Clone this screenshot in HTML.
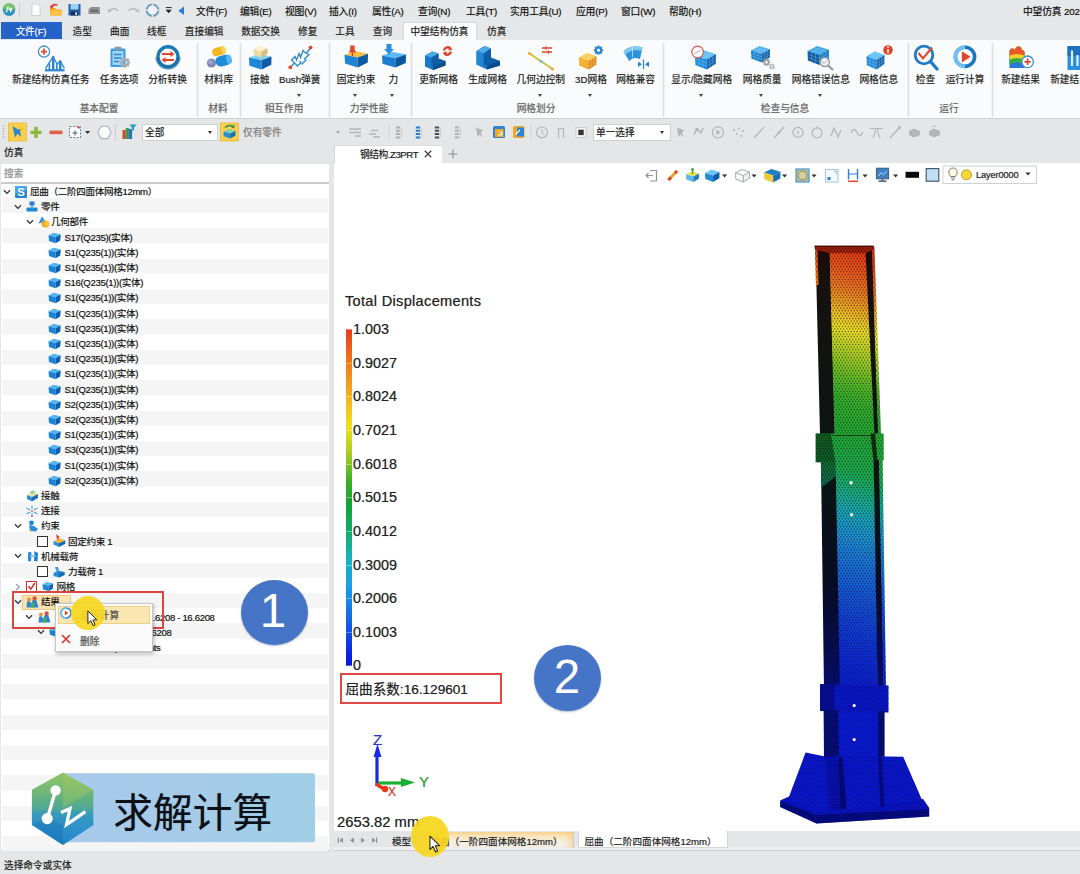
<!DOCTYPE html><html lang="zh"><head><meta charset="utf-8"><title>中望仿真 2022</title><style>
*{box-sizing:border-box;margin:0;padding:0}
html,body{width:1080px;height:874px;overflow:hidden;background:#e5e6e7}
body{font-family:"Liberation Sans","Noto Sans CJK SC",sans-serif;font-size:11px;color:#1a1a1a;position:relative;-webkit-font-smoothing:antialiased;text-shadow:0 0 .7px rgba(20,20,20,.45)}
.a{position:absolute;white-space:nowrap}
.c{position:absolute;white-space:nowrap;transform:translateX(-50%);text-align:center}
svg{position:absolute;overflow:visible}
#title{left:0;top:0;width:1080px;height:22px;background:#e6e7e8}
#tabs{left:0;top:22px;width:1080px;height:18px;background:#e6e7e8}
#ribbon{left:0;top:40px;width:1080px;height:79px;background:#fafbfc;border-bottom:1px solid #cfd0d2}
#tbar{left:0;top:119px;width:1080px;height:25px;background:#e5e6e7}
#row2{left:0;top:144px;width:1080px;height:20px;background:#e5e6e7}
#left{left:1px;top:164px;width:328px;height:686.5px;background:#fff;border-bottom:1px solid #cfd0d2}
#view{left:334px;top:163px;width:746px;height:668px;background:#fff}
#btabs{left:334px;top:831px;width:746px;height:20px;background:linear-gradient(#e4e5e6 0,#e4e5e6 16.5px,#eff0f1 16.5px,#eff0f1 19px,#cbccce 19px)}
#status{left:0;top:851px;width:1080px;height:23px;background:#e5e6e7}
.menu{top:5.7px;font-size:9.8px;line-height:12px;color:#111;letter-spacing:-0.2px}
.tab{font-size:9.7px;line-height:12px;color:#222}
.rl{top:74px;font-size:9.7px;line-height:12px;color:#222}
.gl{top:103px;font-size:9.7px;line-height:12px;color:#6a6a6a}
.sep{position:absolute;top:43px;width:1px;height:74px;background:#e0e1e3;box-shadow:1px 0 0 #f0f1f2,-1px 0 0 #f0f1f2}
.row{position:absolute;left:2px;width:326px;height:15.2px}
.tt{position:absolute;font-size:9.6px;color:#111;white-space:nowrap;line-height:15px;letter-spacing:-0.35px}
.lg{position:absolute;left:353px;font-size:14.4px;color:#222;line-height:16px}
</style></head><body>
<div id="title" class="a">
<span class="a menu" style="left:196px">文件(F)</span>
<span class="a menu" style="left:240px">编辑(E)</span>
<span class="a menu" style="left:285px">视图(V)</span>
<span class="a menu" style="left:329px">插入(I)</span>
<span class="a menu" style="left:372px">属性(A)</span>
<span class="a menu" style="left:418px">查询(N)</span>
<span class="a menu" style="left:466px">工具(T)</span>
<span class="a menu" style="left:510px">实用工具(U)</span>
<span class="a menu" style="left:576px">应用(P)</span>
<span class="a menu" style="left:621px">窗口(W)</span>
<span class="a menu" style="left:669px">帮助(H)</span>
<span class="a menu" style="left:1023px">中望仿真 2022</span>
</div>
<div id="tabs" class="a">
<div class="a" style="left:1px;top:0;width:61px;height:17px;background:#2563c9"></div><span class="c tab" style="left:31px;top:3.7px;color:#fff;letter-spacing:-0.2px;text-shadow:0 0 .6px rgba(255,255,255,.5)">文件(F)</span>
<div class="a" style="left:403px;top:0;width:73.5px;height:18px;background:#fafbfc;border:1px solid #d8d9da;border-bottom:none"></div>
<span class="c tab" style="left:82.2px;top:3.7px">造型</span>
<span class="c tab" style="left:119.7px;top:3.7px">曲面</span>
<span class="c tab" style="left:156.7px;top:3.7px">线框</span>
<span class="c tab" style="left:204.2px;top:3.7px">直接编辑</span>
<span class="c tab" style="left:260.5px;top:3.7px">数据交换</span>
<span class="c tab" style="left:307.8px;top:3.7px">修复</span>
<span class="c tab" style="left:345px;top:3.7px">工具</span>
<span class="c tab" style="left:382.5px;top:3.7px">查询</span>
<span class="c tab" style="left:439.5px;top:3.7px">中望结构仿真</span>
<span class="c tab" style="left:496.7px;top:3.7px">仿真</span>
</div>
<div id="ribbon" class="a"></div>
<span class="c rl" style="left:50.8px">新建结构仿真任务</span>
<span class="c rl" style="left:119.2px">任务选项</span>
<span class="c rl" style="left:167.5px">分析转换</span>
<span class="c rl" style="left:218.7px">材料库</span>
<span class="c rl" style="left:259.7px">接触</span>
<span class="c rl" style="left:299.7px">Bush弹簧</span>
<div class="a" style="left:296.7px;top:93.5px;border:2.7px solid transparent;border-top:3px solid #444;width:0;height:0"></div>
<span class="c rl" style="left:356px">固定约束</span>
<div class="a" style="left:353px;top:93.5px;border:2.7px solid transparent;border-top:3px solid #444;width:0;height:0"></div>
<span class="c rl" style="left:393.3px">力</span>
<div class="a" style="left:390.3px;top:93.5px;border:2.7px solid transparent;border-top:3px solid #444;width:0;height:0"></div>
<span class="c rl" style="left:438.5px">更新网格</span>
<span class="c rl" style="left:487.5px">生成网格</span>
<span class="c rl" style="left:540.8px">几何边控制</span>
<div class="a" style="left:537.8px;top:93.5px;border:2.7px solid transparent;border-top:3px solid #444;width:0;height:0"></div>
<span class="c rl" style="left:591px">3D网格</span>
<div class="a" style="left:588px;top:93.5px;border:2.7px solid transparent;border-top:3px solid #444;width:0;height:0"></div>
<span class="c rl" style="left:635.5px">网格兼容</span>
<span class="c rl" style="left:701.7px">显示/隐藏网格</span>
<div class="a" style="left:698.7px;top:93.5px;border:2.7px solid transparent;border-top:3px solid #444;width:0;height:0"></div>
<span class="c rl" style="left:762.2px">网格质量</span>
<div class="a" style="left:759.2px;top:93.5px;border:2.7px solid transparent;border-top:3px solid #444;width:0;height:0"></div>
<span class="c rl" style="left:820.8px">网格错误信息</span>
<div class="a" style="left:817.8px;top:93.5px;border:2.7px solid transparent;border-top:3px solid #444;width:0;height:0"></div>
<span class="c rl" style="left:878.8px">网格信息</span>
<span class="c rl" style="left:925.5px">检查</span>
<span class="c rl" style="left:965px">运行计算</span>
<span class="c rl" style="left:1020.5px">新建结果</span>
<span class="c rl" style="left:1074.4px">新建结果集</span>
<span class="c gl" style="left:99px">基本配置</span>
<span class="c gl" style="left:218px">材料</span>
<span class="c gl" style="left:284px">相互作用</span>
<span class="c gl" style="left:369px">力学性能</span>
<span class="c gl" style="left:536px">网格划分</span>
<span class="c gl" style="left:785px">检查与信息</span>
<span class="c gl" style="left:949px">运行</span>
<div class="sep" style="left:197px"></div>
<div class="sep" style="left:240px"></div>
<div class="sep" style="left:328.5px"></div>
<div class="sep" style="left:411px"></div>
<div class="sep" style="left:663px"></div>
<div class="sep" style="left:907.5px"></div>
<div class="sep" style="left:992px"></div>
<div id="tbar" class="a">
<div class="a" style="left:141.5px;top:5px;width:76px;height:17px;background:#fff;border:1px solid #cfd0d2"></div><span class="a" style="left:145px;top:7.5px;font-size:9.7px;line-height:12px">全部</span>
<div class="a" style="left:208px;top:12px;border:2.6px solid transparent;border-top:3px solid #333"></div>
<span class="a" style="left:243px;top:7.5px;font-size:9.7px;line-height:12px;color:#8a8a8a">仅有零件</span>
<div class="a" style="left:336px;top:12px;border:2.6px solid transparent;border-top:3px solid #aaa"></div>
<div class="a" style="left:592.5px;top:5px;width:78px;height:17px;background:#fff;border:1px solid #cfd0d2"></div><span class="a" style="left:596px;top:7.5px;font-size:9.7px;line-height:12px">单一选择</span>
<div class="a" style="left:660px;top:12px;border:2.6px solid transparent;border-top:3px solid #333"></div>
</div>
<div id="row2" class="a">
<span class="a" style="left:4px;top:3px;font-size:9.7px;line-height:12px">仿真</span>
<div class="a" style="left:333.5px;top:0.5px;width:108.5px;height:19.5px;background:#fff;border-left:1px solid #d4d5d6;border-top:1px solid #dcdcdd"></div><span class="a" style="left:360px;top:4.5px;font-size:9.7px;line-height:12px;letter-spacing:-0.45px">钢结构.Z3PRT</span><svg style="left:424px;top:5.5px" width="8" height="8" viewBox="0 0 8 8"><path d="M0.8 0.8L7.2 7.2M7.2 0.8L0.8 7.2" stroke="#3c3c3c" stroke-width="1.25"/></svg><svg style="left:447.5px;top:5px" width="10" height="10" viewBox="0 0 10 10"><path d="M5 0.5V9.5M0.5 5H9.5" stroke="#8c8e90" stroke-width="1.1"/></svg>
</div>
<div id="left" class="a"></div>
<div class="a" style="left:1px;top:164px;width:328px;height:19.6px;background:#fff;border-bottom:2.2px solid #cbcbcc"></div><span class="a" style="left:4px;top:168px;font-size:9.7px;line-height:12px;color:#999">搜索</span>
<div class="row" style="top:197.8px;background:#f5f5f5"></div>
<div class="row" style="top:228.2px;background:#f5f5f5"></div>
<div class="row" style="top:258.6px;background:#f5f5f5"></div>
<div class="row" style="top:289.0px;background:#f5f5f5"></div>
<div class="row" style="top:319.4px;background:#f5f5f5"></div>
<div class="row" style="top:349.8px;background:#f5f5f5"></div>
<div class="row" style="top:380.2px;background:#f5f5f5"></div>
<div class="row" style="top:410.6px;background:#f5f5f5"></div>
<div class="row" style="top:441.0px;background:#f5f5f5"></div>
<div class="row" style="top:471.4px;background:#f5f5f5"></div>
<div class="row" style="top:501.8px;background:#f5f5f5"></div>
<div class="row" style="top:532.2px;background:#f5f5f5"></div>
<div class="row" style="top:562.6px;background:#f5f5f5"></div>
<div class="row" style="top:593.0px;background:#f5f5f5"></div>
<div class="row" style="top:623.4px;background:#f5f5f5"></div>
<div class="row" style="top:653.8px;background:#f5f5f5"></div>
<div class="row" style="top:684.2px;background:#f5f5f5"></div>
<div class="row" style="top:714.6px;background:#f5f5f5"></div>
<div class="row" style="top:745.0px;background:#f5f5f5"></div>
<div class="row" style="top:775.4px;background:#f5f5f5"></div>
<div class="row" style="top:805.8px;background:#f5f5f5"></div>
<div class="row" style="top:836.2px;background:#f5f5f5"></div>
<div id="view" class="a"></div>
<div id="btabs" class="a"></div>
<div id="status" class="a"><span class="a" style="left:4px;top:8.6px;font-size:9.7px;line-height:12px">选择命令或实体</span></div>
<svg style="left:3px;top:188.6px" width="8" height="6" viewBox="0 0 8 6"><path d="M1 1.2L4 4.4L7 1.2" fill="none" stroke="#333" stroke-width="1.3"/></svg>
<svg style="left:15.3px;top:185.6px" width="12" height="12" viewBox="0 0 10 10"><rect width="10" height="10" rx="1" fill="#2389d6"/><path d="M0 0H10V3.5L0 7Z" fill="#46aaea"/><text x="5" y="8.5" font-size="9.5" font-weight="bold" text-anchor="middle" fill="#fff" font-family="Liberation Sans, sans-serif">S</text></svg>
<span class="tt" style="left:30px;top:184.0px;">屈曲（二阶四面体网格12mm）</span>
<svg style="left:14px;top:203.79999999999998px" width="8" height="6" viewBox="0 0 8 6"><path d="M1 1.2L4 4.4L7 1.2" fill="none" stroke="#333" stroke-width="1.3"/></svg>
<svg style="left:26px;top:201.3px" width="12" height="11" viewBox="0 0 12 11"><rect x="3.5" y="0.5" width="5" height="4" fill="#2a7fd0"/><rect x="0.5" y="6.5" width="11" height="4" rx="1" fill="#1f8ad8"/><path d="M6 4.5V6.5" stroke="#2a7fd0" stroke-width="1.4"/></svg>
<span class="tt" style="left:41px;top:199.2px;">零件</span>
<svg style="left:25.5px;top:219.0px" width="8" height="6" viewBox="0 0 8 6"><path d="M1 1.2L4 4.4L7 1.2" fill="none" stroke="#333" stroke-width="1.3"/></svg>
<svg style="left:37.5px;top:216.0px" width="12" height="12" viewBox="0 0 12 12"><path d="M4 0.5L8 6L0.5 7.5Z" fill="#2f8fe0"/><ellipse cx="7.5" cy="8" rx="4" ry="3.4" fill="#f4a91e"/><ellipse cx="9" cy="7.4" rx="2.2" ry="2.6" fill="#fbc84a"/></svg>
<span class="tt" style="left:51px;top:214.4px;">几何部件</span>
<svg style="left:47.8px;top:231.5px" width="13" height="11.8" viewBox="0 0 25 22"><path d="M1 6L11 1L24.5 4.5L14.5 9.5Z" fill="#52b4f0"/><path d="M1 6L14.5 9.5L14.5 21.5L2 17Z" fill="#1c82d6"/><path d="M14.5 9.5L24.5 4.5L23.5 16L14.5 21.5Z" fill="#0d5fae"/></svg>
<span class="tt" style="left:64.5px;top:229.6px;">S17(Q235)(实体)</span>
<svg style="left:47.8px;top:246.70000000000002px" width="13" height="11.8" viewBox="0 0 25 22"><path d="M1 6L11 1L24.5 4.5L14.5 9.5Z" fill="#52b4f0"/><path d="M1 6L14.5 9.5L14.5 21.5L2 17Z" fill="#1c82d6"/><path d="M14.5 9.5L24.5 4.5L23.5 16L14.5 21.5Z" fill="#0d5fae"/></svg>
<span class="tt" style="left:64.5px;top:244.8px;">S1(Q235(1))(实体)</span>
<svg style="left:47.8px;top:261.90000000000003px" width="13" height="11.8" viewBox="0 0 25 22"><path d="M1 6L11 1L24.5 4.5L14.5 9.5Z" fill="#52b4f0"/><path d="M1 6L14.5 9.5L14.5 21.5L2 17Z" fill="#1c82d6"/><path d="M14.5 9.5L24.5 4.5L23.5 16L14.5 21.5Z" fill="#0d5fae"/></svg>
<span class="tt" style="left:64.5px;top:260.0px;">S1(Q235(1))(实体)</span>
<svg style="left:47.8px;top:277.1px" width="13" height="11.8" viewBox="0 0 25 22"><path d="M1 6L11 1L24.5 4.5L14.5 9.5Z" fill="#52b4f0"/><path d="M1 6L14.5 9.5L14.5 21.5L2 17Z" fill="#1c82d6"/><path d="M14.5 9.5L24.5 4.5L23.5 16L14.5 21.5Z" fill="#0d5fae"/></svg>
<span class="tt" style="left:64.5px;top:275.2px;">S16(Q235(1))(实体)</span>
<svg style="left:47.8px;top:292.3px" width="13" height="11.8" viewBox="0 0 25 22"><path d="M1 6L11 1L24.5 4.5L14.5 9.5Z" fill="#52b4f0"/><path d="M1 6L14.5 9.5L14.5 21.5L2 17Z" fill="#1c82d6"/><path d="M14.5 9.5L24.5 4.5L23.5 16L14.5 21.5Z" fill="#0d5fae"/></svg>
<span class="tt" style="left:64.5px;top:290.4px;">S1(Q235(1))(实体)</span>
<svg style="left:47.8px;top:307.50000000000006px" width="13" height="11.8" viewBox="0 0 25 22"><path d="M1 6L11 1L24.5 4.5L14.5 9.5Z" fill="#52b4f0"/><path d="M1 6L14.5 9.5L14.5 21.5L2 17Z" fill="#1c82d6"/><path d="M14.5 9.5L24.5 4.5L23.5 16L14.5 21.5Z" fill="#0d5fae"/></svg>
<span class="tt" style="left:64.5px;top:305.6px;">S1(Q235(1))(实体)</span>
<svg style="left:47.8px;top:322.7px" width="13" height="11.8" viewBox="0 0 25 22"><path d="M1 6L11 1L24.5 4.5L14.5 9.5Z" fill="#52b4f0"/><path d="M1 6L14.5 9.5L14.5 21.5L2 17Z" fill="#1c82d6"/><path d="M14.5 9.5L24.5 4.5L23.5 16L14.5 21.5Z" fill="#0d5fae"/></svg>
<span class="tt" style="left:64.5px;top:320.8px;">S1(Q235(1))(实体)</span>
<svg style="left:47.8px;top:337.90000000000003px" width="13" height="11.8" viewBox="0 0 25 22"><path d="M1 6L11 1L24.5 4.5L14.5 9.5Z" fill="#52b4f0"/><path d="M1 6L14.5 9.5L14.5 21.5L2 17Z" fill="#1c82d6"/><path d="M14.5 9.5L24.5 4.5L23.5 16L14.5 21.5Z" fill="#0d5fae"/></svg>
<span class="tt" style="left:64.5px;top:336.0px;">S1(Q235(1))(实体)</span>
<svg style="left:47.8px;top:353.1px" width="13" height="11.8" viewBox="0 0 25 22"><path d="M1 6L11 1L24.5 4.5L14.5 9.5Z" fill="#52b4f0"/><path d="M1 6L14.5 9.5L14.5 21.5L2 17Z" fill="#1c82d6"/><path d="M14.5 9.5L24.5 4.5L23.5 16L14.5 21.5Z" fill="#0d5fae"/></svg>
<span class="tt" style="left:64.5px;top:351.2px;">S1(Q235(1))(实体)</span>
<svg style="left:47.8px;top:368.3px" width="13" height="11.8" viewBox="0 0 25 22"><path d="M1 6L11 1L24.5 4.5L14.5 9.5Z" fill="#52b4f0"/><path d="M1 6L14.5 9.5L14.5 21.5L2 17Z" fill="#1c82d6"/><path d="M14.5 9.5L24.5 4.5L23.5 16L14.5 21.5Z" fill="#0d5fae"/></svg>
<span class="tt" style="left:64.5px;top:366.4px;">S1(Q235(1))(实体)</span>
<svg style="left:47.8px;top:383.50000000000006px" width="13" height="11.8" viewBox="0 0 25 22"><path d="M1 6L11 1L24.5 4.5L14.5 9.5Z" fill="#52b4f0"/><path d="M1 6L14.5 9.5L14.5 21.5L2 17Z" fill="#1c82d6"/><path d="M14.5 9.5L24.5 4.5L23.5 16L14.5 21.5Z" fill="#0d5fae"/></svg>
<span class="tt" style="left:64.5px;top:381.6px;">S1(Q235(1))(实体)</span>
<svg style="left:47.8px;top:398.7px" width="13" height="11.8" viewBox="0 0 25 22"><path d="M1 6L11 1L24.5 4.5L14.5 9.5Z" fill="#52b4f0"/><path d="M1 6L14.5 9.5L14.5 21.5L2 17Z" fill="#1c82d6"/><path d="M14.5 9.5L24.5 4.5L23.5 16L14.5 21.5Z" fill="#0d5fae"/></svg>
<span class="tt" style="left:64.5px;top:396.8px;">S2(Q235(1))(实体)</span>
<svg style="left:47.8px;top:413.90000000000003px" width="13" height="11.8" viewBox="0 0 25 22"><path d="M1 6L11 1L24.5 4.5L14.5 9.5Z" fill="#52b4f0"/><path d="M1 6L14.5 9.5L14.5 21.5L2 17Z" fill="#1c82d6"/><path d="M14.5 9.5L24.5 4.5L23.5 16L14.5 21.5Z" fill="#0d5fae"/></svg>
<span class="tt" style="left:64.5px;top:412.0px;">S2(Q235(1))(实体)</span>
<svg style="left:47.8px;top:429.1px" width="13" height="11.8" viewBox="0 0 25 22"><path d="M1 6L11 1L24.5 4.5L14.5 9.5Z" fill="#52b4f0"/><path d="M1 6L14.5 9.5L14.5 21.5L2 17Z" fill="#1c82d6"/><path d="M14.5 9.5L24.5 4.5L23.5 16L14.5 21.5Z" fill="#0d5fae"/></svg>
<span class="tt" style="left:64.5px;top:427.2px;">S1(Q235(1))(实体)</span>
<svg style="left:47.8px;top:444.3px" width="13" height="11.8" viewBox="0 0 25 22"><path d="M1 6L11 1L24.5 4.5L14.5 9.5Z" fill="#52b4f0"/><path d="M1 6L14.5 9.5L14.5 21.5L2 17Z" fill="#1c82d6"/><path d="M14.5 9.5L24.5 4.5L23.5 16L14.5 21.5Z" fill="#0d5fae"/></svg>
<span class="tt" style="left:64.5px;top:442.4px;">S3(Q235(1))(实体)</span>
<svg style="left:47.8px;top:459.5px" width="13" height="11.8" viewBox="0 0 25 22"><path d="M1 6L11 1L24.5 4.5L14.5 9.5Z" fill="#52b4f0"/><path d="M1 6L14.5 9.5L14.5 21.5L2 17Z" fill="#1c82d6"/><path d="M14.5 9.5L24.5 4.5L23.5 16L14.5 21.5Z" fill="#0d5fae"/></svg>
<span class="tt" style="left:64.5px;top:457.6px;">S1(Q235(1))(实体)</span>
<svg style="left:47.8px;top:474.70000000000005px" width="13" height="11.8" viewBox="0 0 25 22"><path d="M1 6L11 1L24.5 4.5L14.5 9.5Z" fill="#52b4f0"/><path d="M1 6L14.5 9.5L14.5 21.5L2 17Z" fill="#1c82d6"/><path d="M14.5 9.5L24.5 4.5L23.5 16L14.5 21.5Z" fill="#0d5fae"/></svg>
<span class="tt" style="left:64.5px;top:472.8px;">S2(Q235(1))(实体)</span>
<svg style="left:26px;top:489.6px" width="13" height="12" viewBox="0 0 13 12"><path d="M1 5L7 2L12 4L6 7Z" fill="#e8e0a0"/><path d="M1 5L6 7L6 11.5L1 9Z" fill="#2a8fd8"/><path d="M6 7L12 4L12 8L6 11.5Z" fill="#176fb8"/><path d="M3 2.5L7 0.5L10 2L6 4Z" fill="#8cd0a0"/></svg>
<span class="tt" style="left:41px;top:488.0px;">接触</span>
<svg style="left:26px;top:504.8px" width="12" height="12" viewBox="0 0 12 12"><g stroke="#49a6dc" stroke-width="1.1"><path d="M6 0.5V4M6 8V11.5M0.5 3L4 5M8 7L11.5 9M0.5 9L4 7M8 5L11.5 3"/></g><circle cx="6" cy="6" r="1" fill="#e66a5a"/><circle cx="6" cy="11" r="1" fill="#e66a5a"/></svg>
<span class="tt" style="left:41px;top:503.2px;">连接</span>
<svg style="left:14px;top:523.0px" width="8" height="6" viewBox="0 0 8 6"><path d="M1 1.2L4 4.4L7 1.2" fill="none" stroke="#333" stroke-width="1.3"/></svg>
<svg style="left:27px;top:520.0px" width="12" height="12" viewBox="0 0 12 12"><circle cx="4.5" cy="2.8" r="2.4" fill="#1f86d6"/><path d="M2 5L7 6L11 9L9 11.5L3 11Z" fill="#2a8fd8"/><path d="M1 9L6 11.5L3 12Z" fill="#e8d060"/></svg>
<span class="tt" style="left:41px;top:518.4px;">约束</span>
<div class="a" style="left:37px;top:535.6999999999999px;width:11px;height:11px;background:#fff;border:1px solid #333"></div>
<svg style="left:52.8px;top:534.2px" width="12.5" height="13" viewBox="0 0 12.5 13"><path d="M0.5 7L6.8 4.4L12.3 6.2L6 9.2Z" fill="#f6b93a"/><path d="M0.5 7L6 9.2L6 13L0.5 10.6Z" fill="#2a8fd8"/><path d="M6 9.2L12.3 6.2L12.3 9.8L6 13Z" fill="#156ab2"/><path d="M3.2 0.3L6.4 2.6L5 6.6L3.6 4Z" fill="#e8482a"/></svg>
<span class="tt" style="left:68px;top:533.6px;">固定约束 1</span>
<svg style="left:14px;top:553.4px" width="8" height="6" viewBox="0 0 8 6"><path d="M1 1.2L4 4.4L7 1.2" fill="none" stroke="#333" stroke-width="1.3"/></svg>
<svg style="left:27px;top:550.4px" width="12" height="12" viewBox="0 0 12 12"><path d="M1 3.5C1 1 5 1 4.5 4L4 11.5L1 11Z" fill="#2a8fd8"/><path d="M7.5 1L11 3L10.5 11.5L7 11Z" fill="#1f7fd0"/><path d="M3 6L9 6" stroke="#6cc0f0" stroke-width="1.5"/></svg>
<span class="tt" style="left:41px;top:548.8px;">机械载荷</span>
<div class="a" style="left:37px;top:566.1px;width:11px;height:11px;background:#fff;border:1px solid #333"></div>
<svg style="left:53px;top:565.6px" width="12" height="12" viewBox="0 0 12 12"><path d="M0.5 7L5 4.5L11.5 6L11.5 9L6 11.5L0.5 10Z" fill="#2a8fd8"/><path d="M2 1L5 1L6 4L4.5 6L3 4Z" fill="#3f9ee4"/><path d="M5 7L11.5 6L11.5 9L6 11.5Z" fill="#176fb8"/></svg>
<span class="tt" style="left:68px;top:564.0px;">力载荷 1</span>
<svg style="left:14.5px;top:582.8000000000001px" width="6" height="8" viewBox="0 0 6 8"><path d="M1.2 1L4.4 4L1.2 7" fill="none" stroke="#999" stroke-width="1.2"/></svg>
<div class="a" style="left:25.5px;top:581.3000000000001px;width:11px;height:11px;background:#fff;border:1px solid #c0392b"></div><svg style="left:25.5px;top:581.3000000000001px" width="11" height="11" viewBox="0 0 10 10"><path d="M2.2 4.8L4.3 7.4L8 1.8" fill="none" stroke="#d63a2a" stroke-width="1.5"/></svg>
<svg style="left:42px;top:581.3000000000001px" width="11.5" height="11" viewBox="0 0 25 22"><path d="M1 6L11 1L24.5 4.5L14.5 9.5Z" fill="#58b8f0"/><path d="M1 6L14.5 9.5L14.5 21.5L2 17Z" fill="#1f86d6"/><path d="M14.5 9.5L24.5 4.5L23.5 16L14.5 21.5Z" fill="#1468b4"/></svg>
<span class="tt" style="left:56.5px;top:579.2px;">网格</span>
<div class="a" style="left:22px;top:595.4px;width:49px;height:14.5px;background:#fbe3b4;border:1px solid #f0c878"></div>
<svg style="left:13.5px;top:599.0px" width="8" height="6" viewBox="0 0 8 6"><path d="M1 1.2L4 4.4L7 1.2" fill="none" stroke="#333" stroke-width="1.3"/></svg>
<svg style="left:26px;top:596.0px" width="13" height="12" viewBox="0 0 13 12"><path d="M0.5 11.5L1 6Q3 4 4.5 6L5 8L6.5 4.5Q8.5 2 10.5 4.5L12.5 11.5Z" fill="#2a86d4"/><circle cx="3" cy="3.6" r="2" fill="#e8923a"/><circle cx="8.6" cy="2.4" r="2.2" fill="#d8503a"/><path d="M5 7L8 6L8 11.5L5 11.5Z" fill="#4ab050"/></svg>
<span class="tt" style="left:41px;top:594.4px;">结果</span>
<svg style="left:25px;top:614.1999999999999px" width="8" height="6" viewBox="0 0 8 6"><path d="M1 1.2L4 4.4L7 1.2" fill="none" stroke="#333" stroke-width="1.3"/></svg>
<svg style="left:38px;top:611.2px" width="13" height="12" viewBox="0 0 13 12"><path d="M0.5 11.5L1 6Q3 4 4.5 6L5 8L6.5 4.5Q8.5 2 10.5 4.5L12.5 11.5Z" fill="#2a86d4"/><circle cx="3" cy="3.6" r="2" fill="#e8923a"/><circle cx="8.6" cy="2.4" r="2.2" fill="#d8503a"/><path d="M5 7L8 6L8 11.5L5 11.5Z" fill="#4ab050"/></svg>
<span class="tt" style="right:865.4px;top:609.6px">屈曲模态 1 特征值: 16.6208 - 16.6208</span>
<svg style="left:36.5px;top:629.4px" width="8" height="6" viewBox="0 0 8 6"><path d="M1 1.2L4 4.4L7 1.2" fill="none" stroke="#333" stroke-width="1.3"/></svg>
<svg style="left:49px;top:627.4px" width="11" height="10" viewBox="0 0 25 22"><path d="M1 6L11 1L24.5 4.5L14.5 9.5Z" fill="#52b4f0"/><path d="M1 6L14.5 9.5L14.5 21.5L2 17Z" fill="#1c82d6"/><path d="M14.5 9.5L24.5 4.5L23.5 16L14.5 21.5Z" fill="#0d5fae"/></svg>
<span class="tt" style="right:908.6px;top:624.8px">屈曲模态 1 特征值 16.6208</span>
<span class="tt" style="right:919.6px;top:640.0px">Total Displacements</span>
<div class="a" style="left:12px;top:591px;width:152px;height:38px;border:2.4px solid #d9473d"></div>
<div class="a" style="left:55px;top:603px;width:98px;height:49px;background:#fbfbfb;border:1px solid #c6c6c6;box-shadow:1px 2px 4px rgba(0,0,0,.28)"></div>
<div class="a" style="left:57.5px;top:605.5px;width:92px;height:18.5px;background:#fbe6b2;border:1px solid #f2cf86"></div>
<svg style="left:60px;top:607px" width="12" height="12" viewBox="0 0 12 12"><circle cx="6" cy="6" r="5" fill="#fff" stroke="#2a8fe0" stroke-width="1.7"/><path d="M6 1A5 5 0 0 0 6 11" fill="none" stroke="#74c4f4" stroke-width="1.7"/><path d="M4.8 3.6L8.4 6L4.8 8.4Z" fill="#e8452c"/></svg>
<span class="a" style="left:80px;top:608px;font-size:9.8px;color:#555">运行计算</span>
<svg style="left:61px;top:634px" width="10" height="10" viewBox="0 0 10 10"><path d="M1 1L9 9M9 1L1 9" stroke="#d83a2e" stroke-width="1.7"/></svg>
<span class="a" style="left:80px;top:633.5px;font-size:9.8px;color:#555">删除</span>
<div class="a" style="left:71px;top:595.5px;width:34px;height:34px;border-radius:50%;background:rgba(246,214,30,.9)"></div>
<svg style="left:87.4px;top:610.4px" width="10.8" height="17.1" viewBox="0 0 12 19"><path d="M1 1V15L4.3 11.8L6.8 17.5L9 16.5L6.6 11L11 11Z" fill="#fff" stroke="#222" stroke-width="1.1" stroke-linejoin="round"/></svg>
<svg style="left:20px;top:765px" width="310" height="90" viewBox="20 765 310 90" role="img" aria-label="求解计算"><title>求解计算</title><defs><linearGradient id="bn" x1="0" y1="0" x2="1" y2="0"><stop offset="0" stop-color="#a9c9ea"/><stop offset=".5" stop-color="#a6cbe9"/><stop offset="1" stop-color="#9fcfe6"/></linearGradient><linearGradient id="hx" x1="0" y1="0" x2="0" y2="1"><stop offset="0" stop-color="#93c366"/><stop offset=".3" stop-color="#6cb57a"/><stop offset=".5" stop-color="#4fa896"/><stop offset=".56" stop-color="#3a9cbc"/><stop offset=".8" stop-color="#2589c8"/><stop offset="1" stop-color="#1b7cc0"/></linearGradient></defs>
<rect x="60" y="773.3" width="255" height="69" rx="2.5" fill="url(#bn)"/>
<path d="M63 772.6L93.3 789.8V825L63 845L31.9 825V789.8Z" fill="url(#hx)"/>
<path d="M63 772.6L93.3 789.8L63 808Z" fill="#a6cc60" fill-opacity=".35"/><path d="M31.9 825L63 845L63 826L47 816Z" fill="#1a74b8" fill-opacity=".35"/><path d="M63 845L93.3 825L78 816L63 826Z" fill="#3aa0d4" fill-opacity=".3"/>
<path d="M55.6 790.4L47.4 818.5" stroke="#fff" stroke-width="3.3"/><circle cx="55.6" cy="790.4" r="5.2" fill="#fff"/><circle cx="47.2" cy="818.6" r="5.6" fill="#fff"/>
<path d="M61 812.5L70 808.6L66.6 824.6L85.4 811.6" fill="none" stroke="#fff" stroke-width="3.3" stroke-linejoin="miter" stroke-miterlimit="6"/>
<text x="113.3" y="827" font-size="39.7" fill="#0c1018" textLength="158.8" font-family="Liberation Sans, Noto Sans CJK SC, sans-serif">求解计算</text>
</svg>
<span class="a" style="left:345px;top:293px;font-size:14.6px;color:#222;letter-spacing:0.3px">Total Displacements</span>
<div class="a" style="left:346px;top:329px;width:6px;height:337px;background:linear-gradient(to bottom,#e8391c 0%,#f07a1a 10%,#f5b21e 20%,#f0e01a 29%,#a8cc1e 37%,#3cb028 45%,#10a532 52%,#12ac6e 60%,#14b4c0 68%,#18a0e8 76%,#1468e6 86%,#0a2ee0 95%,#0814d8 100%)"></div>
<div class="a" style="left:346px;top:329.2px;width:6px;height:1px;background:rgba(255,255,255,.35)"></div>
<div class="a" style="left:346px;top:362.8px;width:6px;height:1px;background:rgba(255,255,255,.35)"></div>
<div class="a" style="left:346px;top:396.4px;width:6px;height:1px;background:rgba(255,255,255,.35)"></div>
<div class="a" style="left:346px;top:430.1px;width:6px;height:1px;background:rgba(255,255,255,.35)"></div>
<div class="a" style="left:346px;top:463.7px;width:6px;height:1px;background:rgba(255,255,255,.35)"></div>
<div class="a" style="left:346px;top:497.3px;width:6px;height:1px;background:rgba(255,255,255,.35)"></div>
<div class="a" style="left:346px;top:530.9px;width:6px;height:1px;background:rgba(255,255,255,.35)"></div>
<div class="a" style="left:346px;top:564.5px;width:6px;height:1px;background:rgba(255,255,255,.35)"></div>
<div class="a" style="left:346px;top:598.2px;width:6px;height:1px;background:rgba(255,255,255,.35)"></div>
<div class="a" style="left:346px;top:631.8px;width:6px;height:1px;background:rgba(255,255,255,.35)"></div>
<div class="a" style="left:346px;top:665.4px;width:6px;height:1px;background:rgba(255,255,255,.35)"></div>
<span class="lg" style="top:321.2px">1.003</span>
<span class="lg" style="top:354.8px">0.9027</span>
<span class="lg" style="top:388.4px">0.8024</span>
<span class="lg" style="top:422.1px">0.7021</span>
<span class="lg" style="top:455.7px">0.6018</span>
<span class="lg" style="top:489.3px">0.5015</span>
<span class="lg" style="top:522.9px">0.4012</span>
<span class="lg" style="top:556.5px">0.3009</span>
<span class="lg" style="top:590.2px">0.2006</span>
<span class="lg" style="top:623.8px">0.1003</span>
<span class="lg" style="top:657.4px">0</span>
<div class="a" style="left:339.7px;top:673.3px;width:162.6px;height:31.2px;border:2px solid #de4a44"></div>
<span class="a" style="left:345.5px;top:681px;font-size:13.6px;line-height:17px;color:#222">屈曲系数:16.129601</span>
<div class="a" style="left:533.6px;top:645px;width:67.2px;height:66px;border-radius:50%;background:#4674c6;box-shadow:0 1px 2px rgba(40,60,110,.35)"></div><span class="c" style="left:567px;top:648.6px;font-size:47.5px;color:#fff;line-height:56px;text-shadow:none">2</span>
<div class="a" style="left:240.8px;top:580px;width:67.2px;height:65px;border-radius:50%;background:#4674c6;box-shadow:0 1px 2px rgba(40,60,110,.35)"></div><span class="c" style="left:273px;top:583px;font-size:47.5px;color:#fff;line-height:56px;text-shadow:none">1</span>
<span class="a" style="left:337px;top:812.5px;font-size:14.8px;line-height:18px;color:#222">2653.82 mm</span>
<svg style="left:360px;top:728px" width="80" height="80" viewBox="360 728 80 80">
<text x="373" y="745" font-size="15" fill="#2a38d8" font-family="Liberation Sans, sans-serif">Z</text>
<text x="419" y="787" font-size="15" fill="#2aa838" font-family="Liberation Sans, sans-serif">Y</text>
<text x="388" y="796" font-size="12" fill="#e0402a" font-family="Liberation Sans, sans-serif">X</text>
<path d="M377 786V756" stroke="#1a2ae0" stroke-width="3.2" fill="none"/><path d="M373.5 757L377.5 744L381.5 757Z" fill="#1a2ae0"/>
<path d="M378 783H402" stroke="#18b030" stroke-width="3.2" fill="none"/><path d="M401 778L415 782.5L401 787Z" fill="#18b030"/>
<path d="M376 784L384 789" stroke="#e8381e" stroke-width="3.5"/><circle cx="385" cy="789" r="3.2" fill="#e8381e"/>
</svg>
<svg style="left:760px;top:230px" width="320" height="602" viewBox="760 230 320 602"><defs><linearGradient id="rb" gradientUnits="userSpaceOnUse" x1="925.0" y1="246.0" x2="775.0" y2="760.0"><stop offset="0.028" stop-color="#d8301a"/><stop offset="0.039" stop-color="#dc341a"/><stop offset="0.052" stop-color="#ec421a"/><stop offset="0.086" stop-color="#f05c1c"/><stop offset="0.118" stop-color="#f27e22"/><stop offset="0.145" stop-color="#f4a424"/><stop offset="0.168" stop-color="#f4c828"/><stop offset="0.190" stop-color="#f0e428"/><stop offset="0.217" stop-color="#c8dc28"/><stop offset="0.244" stop-color="#9cd028"/><stop offset="0.279" stop-color="#60c02a"/><stop offset="0.315" stop-color="#38b42e"/><stop offset="0.375" stop-color="#24ac36"/><stop offset="0.441" stop-color="#1eb050"/><stop offset="0.468" stop-color="#1ab074"/><stop offset="0.495" stop-color="#18b09c"/><stop offset="0.522" stop-color="#1aa8c0"/><stop offset="0.557" stop-color="#1c94d8"/><stop offset="0.602" stop-color="#1a78e0"/><stop offset="0.656" stop-color="#165ce0"/><stop offset="0.710" stop-color="#1244e0"/><stop offset="0.764" stop-color="#0e30e0"/><stop offset="0.835" stop-color="#0a1edc"/><stop offset="0.979" stop-color="#0816d8"/></linearGradient><linearGradient id="rbd" gradientUnits="userSpaceOnUse" x1="0" y1="246" x2="0" y2="760"><stop offset="0" stop-color="#1c0a06"/><stop offset=".08" stop-color="#151210"/><stop offset=".45" stop-color="#0a1412"/><stop offset=".66" stop-color="#070b22"/><stop offset=".8" stop-color="#060c50"/><stop offset="1" stop-color="#06109a"/></linearGradient><pattern id="dots" width="3" height="5.2" patternUnits="userSpaceOnUse"><circle cx="0.75" cy="1.3" r="0.88" fill="#000" fill-opacity=".5"/><circle cx="2.25" cy="3.9" r="0.88" fill="#000" fill-opacity=".5"/></pattern><pattern id="dots2" width="3" height="5.2" patternUnits="userSpaceOnUse"><circle cx="0.75" cy="1.3" r="0.9" fill="#00002a" fill-opacity=".5"/><circle cx="2.25" cy="3.9" r="0.9" fill="#00002a" fill-opacity=".5"/></pattern></defs>
<path d="M815.5 247L830 252L835 434L820 434Z" fill="url(#rbd)"/>
<path d="M815 247L817.4 247.5L818.6 285L815.9 285Z" fill="url(#rb)"/><path d="M815 247L817.4 247.5L818.6 285L815.9 285Z" fill="url(#dots)"/>
<path d="M829.6 252L866 252L875 434L834.5 434Z" fill="url(#rb)"/><path d="M829.6 252L866 252L875 434L834.5 434Z" fill="url(#dots)"/>
<path d="M865.5 252L872.5 249L878.5 434L874.5 434Z" fill="url(#rbd)"/>
<path d="M872 249L874.4 247L881 434L878 434Z" fill="url(#rb)"/><path d="M872 249L874.4 247L881 434L878 434Z" fill="url(#dots)"/>
<path d="M814.4 245.7L873.8 245.7L874.2 249L866 253L829.6 253L815 249.5Z" fill="#a4220a"/><path d="M814.4 245.7L873.8 245.7L874.2 249L866 253L829.6 253L815 249.5Z" fill="url(#dots)"/>
<path d="M814.6 246.3H873.6" stroke="#2a0804" stroke-width="1.2" stroke-opacity=".8"/>
<path d="M815.7 433.4L883.7 433.4L883.7 460.5L836 462.3L815.7 462.3Z" fill="url(#rb)"/><path d="M815.7 433.4L883.7 433.4L883.7 460.5L836 462.3L815.7 462.3Z" fill="url(#dots)"/>
<path d="M815.7 433.4L831 433.4L835.5 462.3L815.7 462.3Z" fill="#000" fill-opacity=".45"/><path d="M870.5 433.4L875 433.4L877.5 461L873.5 461Z" fill="#000" fill-opacity=".7"/>
<path d="M832 435.5H872" stroke="#06200a" stroke-width="1.2" stroke-opacity=".7"/>
<path d="M821 461L836 461L841.5 691L824 691Z" fill="url(#rbd)"/>
<path d="M820.8 461L836 461L836.4 476L821.6 487Z" fill="url(#rb)"/><path d="M820.8 461L836 461L836.4 476L821.6 487Z" fill="url(#dots)"/>
<path d="M820.8 461L836 461L836.4 476L821.6 487Z" fill="#000" fill-opacity=".38"/>
<path d="M835.6 460L874 460L878 691L840 691Z" fill="url(#rb)"/><path d="M835.6 460L874 460L878 691L840 691Z" fill="url(#dots)"/>
<path d="M873.6 460L879.5 460L884 691L877.6 691Z" fill="url(#rbd)"/>
<path d="M879 460L882.6 460L886 691L883.4 691Z" fill="url(#rb)"/><path d="M879 460L882.6 460L886 691L883.4 691Z" fill="url(#dots)"/>
<circle cx="851" cy="482.8" r="1.7" fill="#fff"/><circle cx="851.6" cy="514.7" r="1.7" fill="#fff"/>
<path d="M820 684L888.5 685.5L888.5 712.5L820 711Z" fill="#0a18d0"/><path d="M820 684L888.5 685.5L888.5 712.5L820 711Z" fill="url(#dots2)"/>
<path d="M820 684L834.5 684.3L834.5 711.4L820 711Z" fill="#000030" fill-opacity=".35"/>
<path d="M823.6 710L839 710L839.5 758L824 758Z" fill="#050c6c"/>
<path d="M838.4 711L878.6 711L878.6 758L839 758Z" fill="#0a1cdc"/><path d="M838.4 711L878.6 711L878.6 758L839 758Z" fill="url(#dots2)"/>
<path d="M878 711L884.6 711L884.6 758L878 758Z" fill="#050c6c"/>
<circle cx="854.2" cy="705.6" r="1.6" fill="#fff"/><circle cx="854.2" cy="739.6" r="1.6" fill="#fff"/>
<path d="M780.2 800.4L789 796.5L923 799L929.2 808L929.2 816.5L816.5 823.6L780.2 807Z" fill="#0a14cc"/><path d="M780.2 800.4L789 796.5L923 799L929.2 808L929.2 816.5L816.5 823.6L780.2 807Z" fill="url(#dots2)"/>
<path d="M780.2 801.5L816.5 815L929.2 809L929.2 816.5L816.5 823.6L780.2 807Z" fill="#000028" fill-opacity=".42"/>
<path d="M805.6 752.6L825 756.5L884 756.5L903.2 756.8L922 800L860 808.5L816 812L788 799.5Z" fill="#0a18d6"/><path d="M805.6 752.6L825 756.5L884 756.5L903.2 756.8L922 800L860 808.5L816 812L788 799.5Z" fill="url(#dots2)"/>
<path d="M838.5 757L842.5 757L846.5 809L840.5 809.5Z" fill="#000040" fill-opacity=".6"/><path d="M878 757L882 757L884.5 806L880.5 806.5Z" fill="#000040" fill-opacity=".5"/>
<path d="M825 757L838.5 757L840.5 809.5L829 810.5Z" fill="#000040" fill-opacity=".22"/>
</svg>
<svg style="left:0;top:0" width="1080" height="874" viewBox="0 0 1080 874"><circle cx="9" cy="9.5" r="6.3" fill="#3aa7a0"/><path d="M3 8A6.3 6.3 0 0 1 15 8L9 10Z" fill="#7cc36c"/><path d="M4 13A6.3 6.3 0 0 0 14.5 12.5L9 10Z" fill="#2c8fc4"/><path d="M6.3 12.5L8.2 6.5M8.6 10L10 8.2L10.6 11.4L12.2 8" stroke="#fff" stroke-width="1.1" fill="none"/><path d="M19.5 3V17" stroke="#cfcfcf" stroke-width="1"/><path d="M32 4H37.5L40 6.5V15.5H32Z" fill="#fdfdfd" stroke="#c4c4c4" stroke-width=".7"/><path d="M50 8H55L56.5 9.5H61.5V15.5H50Z" fill="#f5a623"/><path d="M51 10.5H62L60.5 15.5H50Z" fill="#fbc540"/><path d="M51 7.5Q53 3.5 57.5 5" stroke="#e0402a" stroke-width="1.6" fill="none"/><path d="M49.6 5.2L51.2 9L54 6.4Z" fill="#e0402a"/><path d="M68.5 4H80.5V15.5H68.5Z" fill="#1f5fa8"/><path d="M70.5 4H78.5V9.5H70.5Z" fill="#9fd0f2"/><path d="M71 11.5H78V15.5H71Z" fill="#12305c"/><path d="M75.3 12.3H77V15H75.3Z" fill="#dfe8f2"/><path d="M88.5 9.5L91 7H99.5L100 9.5V14H88.5Z" fill="#8f8f8f"/><path d="M90.5 9.7H98V12H90.5Z" fill="#6c6c6c"/><path d="M109 11.5Q113.5 6 118.5 11" stroke="#bdbdbd" stroke-width="1.6" fill="none"/><path d="M107.6 8.6L108.4 12.8L112 11Z" fill="#bdbdbd"/><path d="M128.5 11Q133 6 138 11.5" stroke="#bdbdbd" stroke-width="1.6" fill="none"/><path d="M139.6 8.6L138.8 12.8L135 11Z" fill="#bdbdbd"/><circle cx="152.5" cy="10.2" r="5.8" fill="#f2f0fb" stroke="#6d9fb8" stroke-width="2"/><path d="M152.5 3.5V6M152.5 14.5V17M145.8 10.2H148.3M156.7 10.2H159.2" stroke="#e6e7e8" stroke-width="1.4"/><path d="M165.8 7.6H171.6" stroke="#222" stroke-width="1"/><path d="M165.6 9.8H171.8L168.7 13.2Z" fill="#222"/><path d="M184 6.6V15L178.3 10.8Z" fill="#1f7fe0"/><circle cx="44" cy="51.6" r="5.6" fill="#fff" stroke="#3b8fd0" stroke-width="1.3"/><path d="M40.9 51.6H47.1M44 48.5V54.7" stroke="#e2452e" stroke-width="1.7"/><g stroke="#2f86cc" fill="none"><path d="M45 70.3H64.6" stroke-width="2.2"/><path d="M53.2 70V56.2M60.2 70V60.6" stroke-width="2.5"/><path d="M49.4 70V63.6M56.8 70V63.4" stroke-width="1.6"/><path d="M45.4 68.6L53 56.8L57 64L60.2 61L64.4 68.4" stroke-width="1.3"/></g><rect x="110.5" y="48.5" width="15" height="18.5" rx="1.2" fill="#3a9be0"/><rect x="112.5" y="51" width="11" height="14" fill="#9fd6f6"/><rect x="114.5" y="46.8" width="7" height="3.4" rx="1" fill="#7f9db4"/><path d="M114 54.5H121.5M114 58H121.5M114 61.5H119" stroke="#2f86cc" stroke-width="1.3"/><circle cx="125" cy="62.5" r="3.1" fill="none" stroke="#a9adb2" stroke-width="2.5"/><path d="M128.5 62.5L130.2 62.5M127.5 65.0L128.7 66.2M125.0 66.0L125.0 67.8M122.5 65.0L121.3 66.2M121.5 62.5L119.8 62.5M122.5 60.0L121.3 58.8M125.0 59.0L125.0 57.2M127.5 60.0L128.7 58.8" stroke="#a9adb2" stroke-width="2.1"/><circle cx="168" cy="56.8" r="10" fill="#fdfdfd" stroke="#1c7bb4" stroke-width="3.4"/><path d="M157 57A11 11 0 0 0 179 57" fill="none" stroke="#13679c" stroke-width="3.4" stroke-opacity=".55"/><path d="M162 54H171.5" stroke="#e2452e" stroke-width="2"/><path d="M170.5 51L174.5 54L170.5 57Z" fill="#e2452e"/><path d="M164.5 60H174" stroke="#e2452e" stroke-width="2"/><path d="M165.5 57L161.5 60L165.5 63Z" fill="#e2452e"/><circle cx="211.5" cy="63" r="4.6" fill="#7f86b6"/><circle cx="210.5" cy="62" r="2.4" fill="#9aa2cc"/><rect x="212" y="47.2" width="14" height="8.2" rx="4.1" fill="#f6b81f" transform="rotate(-14 219 51)"/><ellipse cx="223.6" cy="49.8" rx="2.3" ry="3.8" fill="#fbd560" transform="rotate(-14 223.6 49.8)"/><rect x="215.5" y="55.5" width="16" height="10.5" rx="5.2" fill="#1f8ad8" transform="rotate(-14 223 61)"/><ellipse cx="229" cy="59.2" rx="2.8" ry="4.8" fill="#55b8f2" transform="rotate(-14 229 59.2)"/><path d="M249.0 57.5L259.1 54.0L271.5 56.6L261.6 60.2Z" fill="#84cff6"/><path d="M249.0 57.5L261.6 60.2L261.6 69.5L249.4 65.8Z" fill="#1f88d6"/><path d="M261.6 60.2L271.5 56.6L271.3 64.8L261.6 69.5Z" fill="#0d5ca6"/><path d="M253.5 49.1L259.8 46.0L267.5 48.3L261.3 51.5Z" fill="#fbf0c8"/><path d="M253.5 49.1L261.3 51.5L261.3 57.5L253.8 54.7Z" fill="#f0dca0"/><path d="M261.3 51.5L267.5 48.3L267.4 54.0L261.3 57.5Z" fill="#d8c07c"/><g fill="none" stroke="#2f86cc" stroke-width="1.3"><path d="M291 66.5L294.5 63"/><path d="M294.5 63L291.5 60L295 56.5L296.5 60L299 53.5L300.5 57.5L303 50.5L306 53.5"/><path d="M294.5 63L297.5 66L301 62.5L299.5 61M304 59.5L309 54.5L306 53.5M301.5 64.5L306.5 59.5"/><path d="M306.5 53L310 48.5"/></g><circle cx="290.3" cy="67.3" r="1.9" fill="#e2452e"/><circle cx="310.6" cy="47.6" r="1.9" fill="#e2452e"/><path d="M344.5 54.7L355.1 51.0L368.0 53.8L357.7 57.6Z" fill="#f9be3c"/><path d="M344.5 54.7L357.7 57.6L357.7 67.5L345.0 63.5Z" fill="#1f84d2"/><path d="M357.7 57.6L368.0 53.8L367.8 62.5L357.7 67.5Z" fill="#0d5aa4"/><path d="M350.2 45.5H354.6V49.5L356 52.5H348.8L350.2 49.5Z" fill="#e2452e"/><path d="M352.4 52.5V56" stroke="#c33" stroke-width="1.3"/><path d="M382.0 55.5L392.8 52.0L406.0 54.6L395.4 58.2Z" fill="#5cb8f0"/><path d="M382.0 55.5L395.4 58.2L395.4 67.5L382.5 63.8Z" fill="#1a7ccc"/><path d="M395.4 58.2L406.0 54.6L405.8 62.9L395.4 67.5Z" fill="#0c559c"/><path d="M386.5 44H391.5V49H394L389 54.5L384 49H386.5Z" fill="#2a8fe0"/><path d="M425 55.5L432.5 51.5L438.5 53.5L438.5 58.5L445.5 61L445.5 65.5L433 70L425 66.5Z" fill="#1a78c8"/><path d="M425 55.5L432.5 51.5L438.5 53.5L431.5 57.5Z" fill="#48aaea"/><path d="M431.5 57.5L438.5 53.5V59L445.5 61L433 66.5L431.5 66Z" fill="#0f5ea6"/><path d="M433 66.5L445.5 61V65.5L433 70Z" fill="#0b4d8a"/><path d="M444 50.5A3.8 3.8 0 0 1 450.6 48.6" fill="none" stroke="#e2452e" stroke-width="2.4"/><path d="M449.3 46L452.6 49.8L448.3 50.6Z" fill="#e2452e"/><path d="M451 51.5A3.8 3.8 0 0 1 444.6 53.6" fill="none" stroke="#e2452e" stroke-width="2.4"/><path d="M446 56L442.6 52.4L447 51.4Z" fill="#e2452e"/><path d="M476.5 51L484.5 46L491 48.5V57.5L500 61V65.5L487 69.5L476.5 64.5Z" fill="#1a78c8"/><path d="M476.5 51L484.5 46L491 48.5L483.5 53.5Z" fill="#48aaea"/><path d="M483.5 53.5L491 48.5V58L500 61L487 65.5L483.5 64.5Z" fill="#0f5ea6"/><path d="M487 65.5L500 61V65.5L487 69.5Z" fill="#0b4d8a"/><path d="M476.5 51L483.5 53.5V67.8L476.5 64.5Z" fill="#2285d4"/><path d="M529.5 53.5L552.5 69" stroke="#c9c23a" stroke-width="2"/><circle cx="529.5" cy="53.5" r="1.6" fill="#e8a83a"/><circle cx="541" cy="61.2" r="1.5" fill="#6fb8e8"/><circle cx="552.5" cy="69" r="1.6" fill="#e8a83a"/><path d="M542 48H552M542 52H552" stroke="#e2452e" stroke-width="1.6"/><path d="M546 46.2V49.8M548.5 50.2V53.8" stroke="#e2452e" stroke-width="1.2"/><path d="M579.0 57.4L586.9 53.0L596.5 56.3L588.8 60.9Z" fill="#fbc94e"/><path d="M579.0 57.4L588.8 60.9L588.8 69.5L579.4 65.5Z" fill="#f5a21c"/><path d="M588.8 60.9L596.5 56.3L596.3 64.5L588.8 69.5Z" fill="#dc8410"/><path d="M582.3 58.6L582.5 66.9M591.4 59.4L591.3 67.8M579.1 60.1L588.8 63.8L596.4 59.1M581.6 56.0L591.4 59.4M582.3 58.6L590.1 54.1M585.5 59.8L585.6 68.2M593.9 57.9L593.8 66.2M579.2 62.8L588.8 66.6L596.4 61.8M584.2 54.5L593.9 57.9M585.5 59.8L593.3 55.2" stroke="#fff0c0" stroke-width=".5" stroke-opacity=".55" fill="none"/><circle cx="598.5" cy="50.2" r="2.7" fill="none" stroke="#2a86d4" stroke-width="2.2"/><path d="M601.6 50.2L603.1 50.2M600.7 52.4L601.8 53.5M598.5 53.3L598.5 54.8M596.3 52.4L595.2 53.5M595.4 50.2L593.9 50.2M596.3 48.0L595.2 46.9M598.5 47.1L598.5 45.6M600.7 48.0L601.8 46.9" stroke="#2a86d4" stroke-width="1.8"/><path d="M623.5 51.5Q630 44.5 642.5 47.5L640 59Q632 56 629.5 61.5Z" fill="#2a93e0"/><path d="M623.5 51.5Q630 44.5 642.5 47.5L641.6 51Q631 48.5 625 55Z" fill="#7fcbf6"/><path d="M632.5 47V57" stroke="#d6eefc" stroke-width=".7"/><path d="M643.5 59.5V69" stroke="#2a86d4" stroke-width="1.2"/><path d="M638 61.5L642 64.3L638 67Z" fill="#2a86d4"/><path d="M649 61.5L645 64.3L649 67Z" fill="#2a86d4"/><path d="M695.0 55.6L704.5 50.5L716.0 54.3L706.8 59.6Z" fill="#5cc0f4"/><path d="M695.0 55.6L706.8 59.6L706.8 69.5L695.4 64.9Z" fill="#1e8ad8"/><path d="M706.8 59.6L716.0 54.3L715.8 63.8L706.8 69.5Z" fill="#0f60ac"/><path d="M698.9 56.9L699.2 66.5M709.8 57.9L709.8 67.6M695.1 58.7L706.8 62.9L715.9 57.5M698.1 53.9L709.8 57.9M698.9 56.9L708.3 51.8M702.8 58.3L703.0 68.0M712.9 56.1L712.8 65.7M695.3 61.8L706.8 66.2L715.9 60.6M701.3 52.2L712.9 56.1M702.8 58.3L712.1 53.1" stroke="#bfe2fa" stroke-width=".5" stroke-opacity=".55" fill="none"/><circle cx="697.6" cy="52" r="5.8" fill="#fbfbfb" stroke="#d85a50" stroke-width="1.2"/><path d="M694 53.5L700.5 50.5" stroke="#9fb6c8" stroke-width="1"/><path d="M751.0 50.4L759.5 46.0L770.0 49.3L761.6 53.9Z" fill="#4fb0ee"/><path d="M751.0 50.4L761.6 53.9L761.6 62.5L751.4 58.5Z" fill="#1a7fcc"/><path d="M761.6 53.9L770.0 49.3L769.8 57.5L761.6 62.5Z" fill="#0e5ea6"/><path d="M754.5 51.6L754.8 59.9M764.4 52.4L764.4 60.9M751.1 53.1L761.6 56.8L769.9 52.1M753.9 49.0L764.4 52.4M754.5 51.6L763.0 47.1M758.1 52.8L758.2 61.2M767.2 50.9L767.1 59.2M751.3 55.8L761.6 59.6L769.9 54.8M756.7 47.5L767.2 50.9M758.1 52.8L766.5 48.2" stroke="#bfe2fa" stroke-width=".5" stroke-opacity=".55" fill="none"/><circle cx="766.5" cy="62.2" r="2.2" fill="none" stroke="#9ea3a8" stroke-width="1.8"/><path d="M769.0 62.2L770.3 62.2M768.3 64.0L769.2 64.9M766.5 64.7L766.5 66.0M764.7 64.0L763.8 64.9M764.0 62.2L762.7 62.2M764.7 60.4L763.8 59.5M766.5 59.7L766.5 58.4M768.3 60.4L769.2 59.5" stroke="#9ea3a8" stroke-width="1.5"/><circle cx="772" cy="66.6" r="1.7" fill="none" stroke="#b4b8bc" stroke-width="1.4"/><path d="M774.0 66.6L774.9 66.6M773.4 68.0L774.1 68.7M772.0 68.6L772.0 69.5M770.6 68.0L769.9 68.7M770.0 66.6L769.1 66.6M770.6 65.2L769.9 64.5M772.0 64.6L772.0 63.7M773.4 65.2L774.1 64.5" stroke="#b4b8bc" stroke-width="1.2"/><path d="M807.5 51.1L817.2 46.0L829.0 49.8L819.5 55.1Z" fill="#3fa6e8"/><path d="M807.5 51.1L819.5 55.1L819.5 65.0L807.9 60.4Z" fill="#0e5a9c"/><path d="M819.5 55.1L829.0 49.8L828.8 59.3L819.5 65.0Z" fill="#1478c4"/><path d="M811.5 52.4L811.8 62.0M822.7 53.4L822.6 63.1M807.6 54.2L819.5 58.4L828.9 53.0M810.7 49.4L822.7 53.4M811.5 52.4L821.1 47.3M815.5 53.8L815.7 63.5M825.8 51.6L825.7 61.2M807.8 57.3L819.5 61.7L828.9 56.1M813.9 47.7L825.8 51.6M815.5 53.8L825.1 48.6" stroke="#bfe2fa" stroke-width=".5" stroke-opacity=".55" fill="none"/><circle cx="824.8" cy="62" r="4.5" fill="#f4f7fa" stroke="#8f969c" stroke-width="1.4"/><path d="M828 65.5L833 70" stroke="#8f969c" stroke-width="2.2"/><path d="M822 61L824 63.5L827.5 59.5" stroke="#9ab" stroke-width=".9" fill="none"/><path d="M866.5 56.3L874.6 51.5L884.5 55.1L876.6 60.1Z" fill="#5cc0f4"/><path d="M866.5 56.3L876.6 60.1L876.6 69.5L866.9 65.2Z" fill="#1e8ad8"/><path d="M876.6 60.1L884.5 55.1L884.3 64.1L876.6 69.5Z" fill="#0f60ac"/><path d="M869.9 57.6L870.1 66.6M879.2 58.5L879.2 67.7M866.6 59.3L876.6 63.3L884.4 58.1M869.2 54.7L879.2 58.5M869.9 57.6L877.9 52.7M873.2 58.9L873.3 68.1M881.9 56.8L881.7 65.9M866.7 62.2L876.6 66.4L884.4 61.1M871.9 53.1L881.9 56.8M873.2 58.9L881.2 53.9" stroke="#bfe2fa" stroke-width=".5" stroke-opacity=".55" fill="none"/><circle cx="888" cy="50" r="4.8" fill="#e2452e"/><path d="M888 49V53.2" stroke="#fff" stroke-width="1.5"/><circle cx="888" cy="47" r=".9" fill="#fff"/><circle cx="924" cy="55" r="8.8" fill="#f6fafd" stroke="#1f7cc4" stroke-width="2.8"/><path d="M930.5 61.5L937 69" stroke="#1f7cc4" stroke-width="3.4" stroke-linecap="round"/><path d="M918.5 53L923 58.5L932 47.5" fill="none" stroke="#e2452e" stroke-width="2"/><circle cx="965" cy="56.8" r="9.6" fill="#fdfdfd" stroke="#1b78c0" stroke-width="3.6"/><path d="M965 47.2A9.6 9.6 0 0 0 965 66.4" fill="none" stroke="#6fc0f0" stroke-width="3.6"/><path d="M961.8 51.2L970.6 56.8L961.8 62.4Z" fill="#e2452e"/><path d="M1009.5 68V52Q1009.5 48.5 1012.5 48.5Q1014.5 48.5 1015 50.5Q1015.5 46.5 1018.5 46.5Q1021.5 46.5 1022 50Q1024.5 50 1024.5 53V68Z" fill="#2a78d8"/><path d="M1009.5 64V52Q1009.5 48.5 1012.5 48.5Q1014.5 48.5 1015 50.5Q1015.5 46.5 1018.5 46.5Q1021.5 46.5 1022 50Q1024.5 50 1024.5 53V64Q1017 61 1009.5 64Z" fill="#38ac48"/><path d="M1009.5 59.5V52Q1009.5 48.5 1012.5 48.5Q1014.5 48.5 1015 50.5Q1015.5 46.5 1018.5 46.5Q1021.5 46.5 1022 50Q1024.5 50 1024.5 53V59.5Q1017 56.5 1009.5 59.5Z" fill="#f2d024"/><path d="M1009.5 55.5V52Q1009.5 48.5 1012.5 48.5Q1014.5 48.5 1015 50.5Q1015.5 46.5 1018.5 46.5Q1021.5 46.5 1022 50Q1024.5 50 1024.5 53V55.5Q1017 52.5 1009.5 55.5Z" fill="#e8562a"/><circle cx="1027.6" cy="61.8" r="5.8" fill="#fff" stroke="#3b8fd0" stroke-width="1.3"/><path d="M1024.4 61.8H1030.8M1027.6 58.6V65.0" stroke="#e2452e" stroke-width="1.7"/><rect x="1067.5" y="46" width="14" height="24" fill="#2a8fe0"/><path d="M1067.5 46H1082V56H1067.5Z" fill="#1d6fc0"/><path d="M1072 50.5V66M1077.5 55V66" stroke="#dff0fc" stroke-width="2.2"/><path d="M3.5 125.5V139" stroke="#9a9a9a" stroke-width="1.2" stroke-dasharray="1.2 1.6"/><rect x="8.5" y="123" width="18" height="18" fill="#f9d04c" stroke="#e8b93a" stroke-width=".8"/><path d="M12.5 126L15 137.5L17.5 133.5L21 137L20 131L23 128.5L18 129.5Z" fill="#2a86d4"/><path d="M19.5 127L23.5 128L20.5 131.5Z" fill="#e8c020"/><path d="M30.5 132.4H41.5M36 126.8V138" stroke="#8cb83a" stroke-width="3.4"/><path d="M49.5 132.4H62.5" stroke="#d9604c" stroke-width="3.6"/><rect x="69.5" y="126.5" width="11" height="11" fill="#fbfbfb" stroke="#5f7fa0" stroke-width="1" stroke-dasharray="2 1.4"/><path d="M72.5 133H77.5M75 130.5V135.5" stroke="#555" stroke-width="1"/><path d="M77.5 127.5H80M78.8 126.3V128.8" stroke="#e2452e" stroke-width="1"/><path d="M85 131L87.6 134L90.2 131Z" fill="#333"/><path d="M101.2 126.2H107.8L111.2 132.4L107.8 138.6H101.2L97.8 132.4Z" fill="#fdfdfd" stroke="#9fb6c8" stroke-width="1.1"/><path d="M115.5 124V141" stroke="#cfcfcf" stroke-width="1"/><rect x="122.5" y="130" width="3.2" height="9" fill="#d8452e"/><rect x="125.7" y="128" width="3.2" height="11" fill="#3a9a4a"/><rect x="128.9" y="129" width="3.2" height="10" fill="#2a6fc8"/><path d="M129.5 124.5H136.5L134 128V131L132 129.6V128Z" fill="#2aa0c0"/><rect x="220.5" y="123" width="18" height="18" fill="#f9d04c" stroke="#e8b93a" stroke-width=".8"/><path d="M223.5 131.6L228.9 129.0L235.5 130.9L230.2 133.6Z" fill="#7fd0c0"/><path d="M223.5 131.6L230.2 133.6L230.2 138.5L223.7 136.2Z" fill="#2a8fd0"/><path d="M230.2 133.6L235.5 130.9L235.4 135.7L230.2 138.5Z" fill="#1a6fb0"/><path d="M225 127.5Q229 124 233 126.5" stroke="#3a8a4a" stroke-width="1.6" fill="none"/><path d="M234.5 124.5L234.3 128.6L231 127Z" fill="#3a8a4a"/><path d="M349.5 129H361M349.5 132.5H361M355 136H361" stroke="#b3b5b8" stroke-width="1.4"/><path d="M369 134H376M371 130.5H378M373 137H380" stroke="#b3b5b8" stroke-width="1.4"/><path d="M389 124V141" stroke="#d2d2d2" stroke-width="1"/><path d="M395.8 127.5H400.2M395.8 130.8H400.2M395.8 134.1H400.2M395.8 137.4H400.2" stroke="#aeb0b3" stroke-width="2"/><path d="M401.6 128V137" stroke="#c4c6c8" stroke-width=".8"/><path d="M415.8 127.5H420.2M415.8 130.8H420.2M415.8 134.1H420.2M415.8 137.4H420.2" stroke="#2a7fc4" stroke-width="2"/><path d="M421.6 128V137" stroke="#c4c6c8" stroke-width=".8"/><path d="M434.8 127.5H439.2M434.8 130.8H439.2M434.8 134.1H439.2M434.8 137.4H439.2" stroke="#4a4f58" stroke-width="2"/><path d="M440.6 128V137" stroke="#c4c6c8" stroke-width=".8"/><path d="M454.8 127.5H459.2M454.8 130.8H459.2M454.8 134.1H459.2M454.8 137.4H459.2" stroke="#b0b2b5" stroke-width="2"/><path d="M460.6 128V137" stroke="#c4c6c8" stroke-width=".8"/><path d="M476 127.5L477.5 137L479.5 134.5L482 137.5L481 132L483.5 130.5Z" fill="#b3b5b8"/><rect x="493" y="126" width="12" height="12" rx="1.5" fill="#2a86d4"/><rect x="495" y="129" width="8.5" height="8" fill="#f5a623"/><path d="M498 131L502 135M502 131V135H498" stroke="#fff" stroke-width="1" fill="none"/><rect x="513" y="126" width="11.5" height="12" rx="1.5" fill="#f5a623"/><rect x="517" y="127.5" width="7" height="9" fill="#2a86d4"/><path d="M516 134L520 130" stroke="#fff" stroke-width="1.2"/><path d="M531 124V141" stroke="#d2d2d2" stroke-width="1"/><circle cx="542" cy="132.4" r="5.4" fill="none" stroke="#b3b5b8" stroke-width="1.2"/><path d="M542 129V132.6L544.4 134.6" stroke="#b3b5b8" stroke-width="1" fill="none"/><path d="M558.5 138V128.5H563.5V138" fill="none" stroke="#b3b5b8" stroke-width="1.2"/><rect x="576" y="127.4" width="10" height="10" fill="#f4f4f4" stroke="#c2c4c6" stroke-width=".8"/><rect x="578.3" y="129.7" width="5.4" height="5.4" fill="#333"/><path d="M677 127.5L678.5 137L680.5 134.5L683 137.5L682 132L684.5 130.5Z" fill="#b3b5b8"/><path d="M694 135L697 129L701 133L703 128" stroke="#b3b5b8" stroke-width="1.4" fill="none"/><circle cx="697" cy="129.5" r="1.8" fill="#b3b5b8"/><circle cx="718" cy="132.4" r="5.6" fill="none" stroke="#b3b5b8" stroke-width="1.2"/><path d="M716.4 129.6L720.8 132.4L716.4 135.2Z" fill="#b3b5b8"/><g fill="#b3b5b8"><circle cx="734" cy="130" r="1"/><circle cx="739" cy="128.5" r="1"/><circle cx="743" cy="131" r="1"/><circle cx="737" cy="134" r="1"/><circle cx="741.5" cy="136" r="1"/></g><path d="M754 138L764 127" stroke="#b3b5b8" stroke-width="1.2"/><path d="M774 138L784 127" stroke="#b3b5b8" stroke-width="1.2"/><circle cx="779" cy="132.5" r="1.3" fill="#b3b5b8"/><circle cx="798" cy="132.4" r="5" fill="none" stroke="#b3b5b8" stroke-width="1.2"/><circle cx="798" cy="132.4" r="1.1" fill="#b3b5b8"/><circle cx="817" cy="132.8" r="5" fill="none" stroke="#b3b5b8" stroke-width="1.2"/><circle cx="817" cy="127.4" r="1" fill="#b3b5b8"/><path d="M831 136L834 128L838 137L841 130" stroke="#b3b5b8" stroke-width="1.2" fill="none"/><path d="M851 133Q854 126 857 132.5Q860 139 863 132" stroke="#b3b5b8" stroke-width="1.2" fill="none"/><path d="M870 128.5H883M873 138Q875.5 133 875.5 128.5M880 138Q877.5 133 877.5 128.5" stroke="#b3b5b8" stroke-width="1.2" fill="none"/><path d="M890 138L899 128" stroke="#b3b5b8" stroke-width="1.3"/><circle cx="899.5" cy="127.5" r="1.5" fill="#b3b5b8"/><path d="M909 131L914 128.5L920 131V135L914 137.5L909 135Z" fill="#b3b5b8"/><path d="M929 131L934 128.5L940 131V135L934 137.5L929 135Z" fill="#b3b5b8"/><path d="M932 127L934 125.5L936 127" stroke="#b3b5b8" stroke-width="1" fill="none"/><path d="M650 170.5H656.5V181H650" fill="none" stroke="#8f9499" stroke-width="1.2"/><path d="M646 175.5H653M648.5 173L646 175.5L648.5 178" fill="none" stroke="#8f9499" stroke-width="1.1"/><path d="M668.5 180L677 171" stroke="#e8a03a" stroke-width="3"/><path d="M668.5 180L671 177.4" stroke="#d8452e" stroke-width="3"/><path d="M675 173L677 171" stroke="#d8452e" stroke-width="3"/><path d="M686.0 174.3L691.9 171.5L699.0 173.6L693.3 176.5Z" fill="#f2e04a"/><path d="M686.0 174.3L693.3 176.5L693.3 182.0L686.3 179.5Z" fill="#5cb8ea"/><path d="M693.3 176.5L699.0 173.6L698.9 178.8L693.3 182.0Z" fill="#1f7fc4"/><path d="M692.5 168V174" stroke="#3aa04a" stroke-width="1.4"/><path d="M690.5 170.3L692.5 167.6L694.5 170.3Z" fill="#3aa04a"/><path d="M705.0 172.9L711.5 169.5L719.5 172.0L713.1 175.5Z" fill="#6cc6f6"/><path d="M705.0 172.9L713.1 175.5L713.1 182.0L705.3 179.0Z" fill="#1f8ad8"/><path d="M713.1 175.5L719.5 172.0L719.4 178.2L713.1 182.0Z" fill="#0f5ca6"/><path d="M722 174.5L724.6 177.5L727.2 174.5Z" fill="#333"/><path d="M735.5 172.9L741.8 169.5L749.5 172.0L743.3 175.5Z" fill="#ffffff"/><path d="M735.5 172.9L743.3 175.5L743.3 182.0L735.8 179.0Z" fill="#fafafa"/><path d="M743.3 175.5L749.5 172.0L749.4 178.2L743.3 182.0Z" fill="#f0f0f0"/><path d="M735.5 172.9L741.8 169.5L749.5 172L749.4 178.2L743.3 182L735.8 179Z M735.5 172.9L743.3 175.5L749.5 172M743.3 175.5V182" fill="none" stroke="#9a9ea3" stroke-width=".9"/><path d="M751.5 174.5L754.1 177.5L756.7 174.5Z" fill="#333"/><path d="M764.0 172.6L771.4 169.0L780.5 171.7L773.2 175.5Z" fill="#1f7fc4"/><path d="M764.0 172.6L773.2 175.5L773.2 182.5L764.3 179.3Z" fill="#f2c83a"/><path d="M773.2 175.5L780.5 171.7L780.3 178.4L773.2 182.5Z" fill="#1b6fb4"/><path d="M782 174.5L784.6 177.5L787.2 174.5Z" fill="#333"/><rect x="796" y="169" width="13" height="13" fill="#b9b489" stroke="#4f9fe0" stroke-width="1.3"/><circle cx="802.5" cy="175.5" r="4.2" fill="#d4cf9c" stroke="#8f8a5c" stroke-width=".8"/><path d="M811.5 174.5L814.1 177.5L816.7 174.5Z" fill="#333"/><rect x="825.5" y="169.5" width="12.5" height="12.5" fill="#f3f9fd" stroke="#9fc4dc" stroke-width="1"/><rect x="827.5" y="177" width="3" height="3" fill="#2a7fd0"/><path d="M834 171.5H836.5V174" stroke="#7fa8c4" stroke-width=".8" fill="none"/><path d="M848.5 169V179.5M857.5 169V179.5" stroke="#2a7fd0" stroke-width="1.4"/><path d="M848.5 174H857.5" stroke="#2a7fd0" stroke-width="1"/><path d="M848 181.3H858" stroke="#e2452e" stroke-width="1.5"/><path d="M862.5 174.5L865.1 177.5L867.7 174.5Z" fill="#333"/><rect x="876.5" y="168.3" width="12" height="10.4" fill="#3a82c6" stroke="#4a6480" stroke-width="1.2"/><path d="M878.5 176L881 172.5L883.5 174.8L886.5 171.2" stroke="#bfe2fa" stroke-width=".9" fill="none"/><path d="M878.5 181.2H886.5" stroke="#5f7286" stroke-width="1.8"/><path d="M882.5 179V181" stroke="#5f7286" stroke-width="2"/><path d="M893 174.5L895.6 177.5L898.2 174.5Z" fill="#333"/><rect x="905.5" y="171.8" width="13.5" height="6" fill="#0a0a0a"/><rect x="926.2" y="168.6" width="12.6" height="12.6" fill="#bfe0f6" stroke="#3f4f5f" stroke-width="1.1"/><rect x="943" y="166" width="93.5" height="17.5" fill="#fdfdfd" stroke="#cfd1d3" stroke-width="1"/><path d="M950.6 176.5Q948.6 174.2 948.8 172.2A4.2 4.2 0 0 1 957.2 172.2Q957.4 174.2 955.4 176.5Z" fill="#fffbe0" stroke="#6f6f6f" stroke-width=".9"/><path d="M951 178H955M951.5 179.8H954.5" stroke="#6f6f6f" stroke-width=".9"/><circle cx="966.5" cy="174.8" r="5" fill="#f4d83a" stroke="#b89a1a" stroke-width=".9"/><path d="M1025.4 172.6L1028 175.6L1030.6 172.6Z" fill="#333"/><g fill="#8f9296" transform="translate(-4,0.3)"><path d="M343 837.2V842.8H341.8V837.2ZM347 837.2V842.8L343.4 840Z"/><path d="M358 837.2V842.8L354 840Z"/><path d="M365 837.2V842.8L369 840Z"/><path d="M376 837.2V842.8L379.6 840ZM380 837.2H381.2V842.8H380Z"/></g></svg>
<span class="a" style="left:392px;top:834px;font-size:9.6px;color:#222">模型</span>
<div class="a" style="left:427px;top:831.5px;width:146.5px;height:16px;background:linear-gradient(to bottom,#f8d28e 0,#fae3b8 22%,#f6eedd 55%,#efeeec 100%);border-right:1px solid #c9cacc;box-shadow:inset -7px 0 6px -4px rgba(250,196,110,.65)"></div><span class="a" style="left:430.5px;top:834px;font-size:9.6px;color:#222">屈曲（一阶四面体网格12mm）</span>
<div class="a" style="left:577.5px;top:831px;width:150px;height:16.5px;background:#fff;border:1px solid #d5d6d8;border-top:none"></div><span class="a" style="left:584.5px;top:834px;font-size:9.6px;color:#222">屈曲（二阶四面体网格12mm）</span>
<span class="a" style="left:976px;top:169.5px;font-size:9.3px;line-height:11px;letter-spacing:-0.15px;color:#222">Layer0000</span>
<div class="a" style="left:410.6px;top:816.2px;width:38px;height:40.5px;border-radius:50%;background:rgba(246,214,30,.93)"></div>
<svg style="left:428.6px;top:835px" width="11.5" height="18.5" viewBox="0 0 12 19"><path d="M1 1V15L4.3 11.8L6.8 17.5L9 16.5L6.6 11L11 11Z" fill="#fff" stroke="#222" stroke-width="1.1" stroke-linejoin="round"/></svg>
</body></html>
